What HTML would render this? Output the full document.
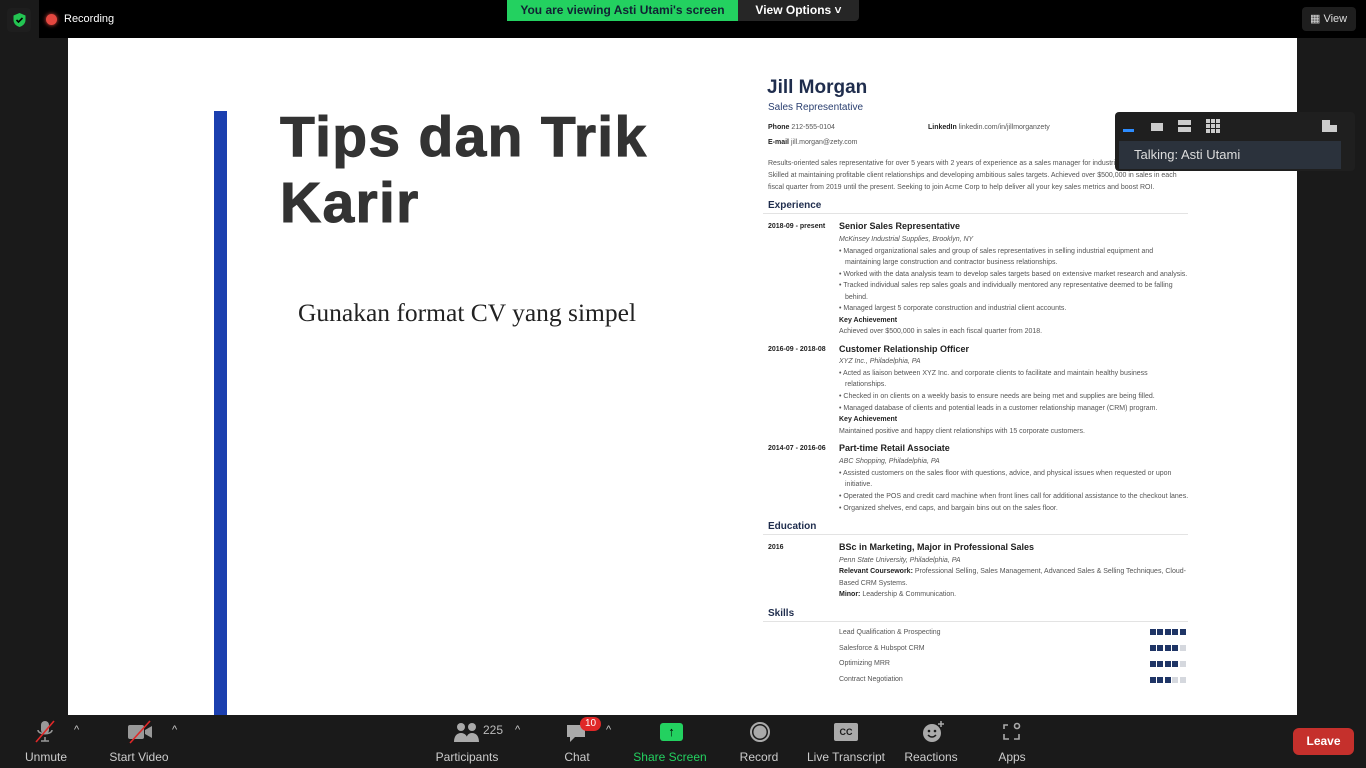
<!DOCTYPE html>
<html><head><meta charset="utf-8"><style>
*{margin:0;padding:0;box-sizing:border-box}
body{width:1366px;height:768px;background:#1a1a1a;position:relative;overflow:hidden;font-family:"Liberation Sans",sans-serif}
.a{position:absolute;white-space:nowrap}
.s{font-size:7px;color:#555}
.b{font-weight:bold;color:#222}
.h{font-size:10px;font-weight:bold;color:#1f2d4d}
.j{font-size:9px;font-weight:bold;color:#222}
.i{font-style:italic}
.tb{position:absolute;top:750px;font-size:12px;color:#ccc;text-align:center;transform:translateX(-50%)}
.sq{display:inline-block;width:6px;height:6px;margin-left:1.6px;background:#1f3566}
.e{background:#d5d8de}
</style></head><body>
<div class="a" style="left:0;top:0;width:1366px;height:38px;background:#000"></div>
<div class="a" style="left:0;top:0;width:39px;height:38px;background:#1a1a1a"></div>
<div class="a" style="left:7px;top:8px;width:24px;height:24px;background:#1e1e1e;border-radius:4px"></div>
<svg class="a" style="left:12px;top:12px" width="15" height="16" viewBox="0 0 15 16"><path d="M7.5 1L1.5 3.5V8c0 3.5 2.7 6 6 7 3.3-1 6-3.5 6-7V3.5z" fill="#23c552"/><path d="M4.5 8l2 2 4-4" stroke="#000" stroke-width="1.6" fill="none"/></svg>
<div class="a" style="left:46px;top:14px;width:11px;height:11px;border-radius:50%;background:#e5473f;box-shadow:0 0 4px #e5473f"></div>
<div class="a" style="left:64px;top:13px;font-size:11px;color:#fff">Recording</div>
<div class="a" style="left:507px;top:0;width:231px;height:21px;background:#23d160;font-size:12px;font-weight:bold;color:#123;line-height:21px;text-align:center">You are viewing Asti Utami's screen</div>
<div class="a" style="left:738px;top:0;width:121px;height:21px;background:#262626;font-size:12px;font-weight:bold;color:#fff;line-height:21px;text-align:center;border-radius:0 0 4px 0">View Options ˅</div>
<div class="a" style="left:1302px;top:7px;width:54px;height:24px;background:#1e1e1e;border-radius:4px;font-size:11px;color:#ddd;line-height:24px;padding-left:8px">▦ View</div>

<div class="a" style="left:68px;top:38px;width:1229px;height:677px;background:#fff"></div>
<div class="a" style="left:214px;top:111px;width:13px;height:604px;background:#1b3faf"></div>
<div class="a" style="left:280px;top:104px;font-size:57px;font-weight:bold;color:#333;line-height:66px;white-space:normal;width:430px;letter-spacing:1.3px;-webkit-text-stroke:1px #333">Tips dan Trik Karir</div>
<div class="a" style="left:298px;top:298px;font-family:'Liberation Serif',serif;font-size:25.5px;color:#222">Gunakan format CV yang simpel</div>

<div class="a" style="left:767px;top:77px;font-size:19px;font-weight:bold;color:#1f2d4d">Jill Morgan</div>
<div class="a" style="left:768px;top:102px;font-size:10px;color:#2a3f70">Sales Representative</div>
<div class="a s" style="left:768px;top:124px"><span class="b">Phone</span>  212-555-0104</div>
<div class="a s" style="left:928px;top:124px"><span class="b">LinkedIn</span>  linkedin.com/in/jillmorganzety</div>
<div class="a s" style="left:768px;top:139px"><span class="b">E-mail</span>  jill.morgan@zety.com</div>
<div class="a s" style="left:768px;top:160px">Results-oriented sales representative for over 5 years with 2 years of experience as a sales manager for industrial</div>
<div class="a s" style="left:768px;top:172px">Skilled at maintaining profitable client relationships and developing ambitious sales targets. Achieved over $500,000 in sales in each</div>
<div class="a s" style="left:768px;top:184px">fiscal quarter from 2019 until the present. Seeking to join Acme Corp to help deliver all your key sales metrics and boost ROI.</div>
<div class="a h" style="left:768px;top:200px">Experience</div>
<div class="a" style="left:763px;top:213px;width:425px;height:1px;background:#e3e3e3"></div>
<div class="a s b" style="left:768px;top:223px">2018-09 - present</div>
<div class="a j" style="left:839px;top:221px">Senior Sales Representative</div>
<div class="a s i" style="left:839px;top:236px">McKinsey Industrial Supplies, Brooklyn, NY</div>
<div class="a s" style="left:839px;top:248px">•  Managed organizational sales and group of sales representatives in selling industrial equipment and</div>
<div class="a s" style="left:845px;top:259px">maintaining large construction and contractor business relationships.</div>
<div class="a s" style="left:839px;top:271px">•  Worked with the data analysis team to develop sales targets based on extensive market research and analysis.</div>
<div class="a s" style="left:839px;top:282px">•  Tracked individual sales rep sales goals and individually mentored any representative deemed to be falling</div>
<div class="a s" style="left:845px;top:294px">behind.</div>
<div class="a s" style="left:839px;top:305px">•  Managed largest 5 corporate construction and industrial client accounts.</div>
<div class="a s b" style="left:839px;top:317px">Key Achievement</div>
<div class="a s" style="left:839px;top:328px">Achieved over $500,000 in sales in each fiscal quarter from 2018.</div>
<div class="a s b" style="left:768px;top:346px">2016-09 - 2018-08</div>
<div class="a j" style="left:839px;top:344px">Customer Relationship Officer</div>
<div class="a s i" style="left:839px;top:358px">XYZ Inc., Philadelphia, PA</div>
<div class="a s" style="left:839px;top:370px">•  Acted as liaison between XYZ Inc. and corporate clients to facilitate and maintain healthy business</div>
<div class="a s" style="left:845px;top:381px">relationships.</div>
<div class="a s" style="left:839px;top:393px">•  Checked in on clients on a weekly basis to ensure needs are being met and supplies are being filled.</div>
<div class="a s" style="left:839px;top:405px">•  Managed database of clients and potential leads in a customer relationship manager (CRM) program.</div>
<div class="a s b" style="left:839px;top:416px">Key Achievement</div>
<div class="a s" style="left:839px;top:428px">Maintained positive and happy client relationships with 15 corporate customers.</div>
<div class="a s b" style="left:768px;top:445px">2014-07 - 2016-06</div>
<div class="a j" style="left:839px;top:443px">Part-time Retail Associate</div>
<div class="a s i" style="left:839px;top:458px">ABC Shopping, Philadelphia, PA</div>
<div class="a s" style="left:839px;top:470px">•  Assisted customers on the sales floor with questions, advice, and physical issues when requested or upon</div>
<div class="a s" style="left:845px;top:481px">initiative.</div>
<div class="a s" style="left:839px;top:493px">•  Operated the POS and credit card machine when front lines call for additional assistance to the checkout lanes.</div>
<div class="a s" style="left:839px;top:505px">•  Organized shelves, end caps, and bargain bins out on the sales floor.</div>
<div class="a h" style="left:768px;top:521px">Education</div>
<div class="a" style="left:763px;top:534px;width:425px;height:1px;background:#e3e3e3"></div>
<div class="a s b" style="left:768px;top:544px">2016</div>
<div class="a j" style="left:839px;top:542px">BSc in Marketing, Major in Professional Sales</div>
<div class="a s i" style="left:839px;top:557px">Penn State University, Philadelphia, PA</div>
<div class="a s" style="left:839px;top:568px"><span class="b">Relevant Coursework:</span> Professional Selling, Sales Management, Advanced Sales &amp; Selling Techniques, Cloud-</div>
<div class="a s" style="left:839px;top:580px">Based CRM Systems.</div>
<div class="a s" style="left:839px;top:591px"><span class="b">Minor:</span> Leadership &amp; Communication.</div>
<div class="a h" style="left:768px;top:608px">Skills</div>
<div class="a" style="left:763px;top:621px;width:425px;height:1px;background:#e3e3e3"></div>
<div class="a s" style="left:839px;top:629px">Lead Qualification &amp; Prospecting</div>
<div class="a s" style="left:839px;top:645px">Salesforce &amp; Hubspot CRM</div>
<div class="a s" style="left:839px;top:660px">Optimizing MRR</div>
<div class="a s" style="left:839px;top:676px">Contract Negotiation</div>
<div class="a" style="left:1148px;top:629px;font-size:0"><i class="sq"></i><i class="sq"></i><i class="sq"></i><i class="sq"></i><i class="sq"></i></div>
<div class="a" style="left:1148px;top:645px;font-size:0"><i class="sq"></i><i class="sq"></i><i class="sq"></i><i class="sq"></i><i class="sq e"></i></div>
<div class="a" style="left:1148px;top:661px;font-size:0"><i class="sq"></i><i class="sq"></i><i class="sq"></i><i class="sq"></i><i class="sq e"></i></div>
<div class="a" style="left:1148px;top:677px;font-size:0"><i class="sq"></i><i class="sq"></i><i class="sq"></i><i class="sq e"></i><i class="sq e"></i></div>

<div class="a" style="left:1115px;top:112px;width:240px;height:59px;background:#1f1f1f;border-radius:4px"></div>
<div class="a" style="left:1123px;top:129px;width:11px;height:3px;background:#2d8cff"></div>
<div class="a" style="left:1151px;top:123px;width:12px;height:8px;background:#ccc"></div>
<div class="a" style="left:1178px;top:120px;width:13px;height:5px;background:#ccc"></div>
<div class="a" style="left:1178px;top:127px;width:13px;height:5px;background:#ccc"></div>
<div class="a" style="left:1206px;top:119px;width:14px;height:14px;background:repeating-linear-gradient(90deg,#ccc 0 4px,transparent 4px 5px);-webkit-mask:repeating-linear-gradient(0deg,#000 0 4px,transparent 4px 5px)"></div>
<div class="a" style="left:1322px;top:120px;width:15px;height:12px;background:#ccc"></div>
<div class="a" style="left:1330px;top:120px;width:7px;height:5px;background:#1f1f1f"></div>
<div class="a" style="left:1119px;top:141px;width:222px;height:28px;background:#2b323c;color:#ddd;font-size:13px;line-height:28px;padding-left:15px">Talking: Asti Utami</div>

<svg class="a" style="left:33px;top:719px" width="24" height="26" viewBox="0 0 24 26"><rect x="8" y="2" width="8" height="13" rx="4" fill="#999"/><path d="M5 11c0 5 14 5 14 0M12 18v4M8 22h8" stroke="#999" stroke-width="1.5" fill="none"/><path d="M3 23L21 2" stroke="#e02828" stroke-width="1.6"/></svg>
<div class="a" style="left:74px;top:724px;color:#ccc;font-size:11px">^</div>
<svg class="a" style="left:126px;top:720px" width="28" height="24" viewBox="0 0 28 24"><rect x="2" y="5" width="16" height="14" rx="2" fill="#999"/><path d="M19 10l7-4v12l-7-4z" fill="#999"/><path d="M4 23L24 1" stroke="#e02828" stroke-width="1.6"/></svg>
<div class="a" style="left:172px;top:724px;color:#ccc;font-size:11px">^</div>
<div class="tb" style="left:46px">Unmute</div>
<div class="tb" style="left:139px">Start Video</div>
<svg class="a" style="left:454px;top:722px" width="26" height="22" viewBox="0 0 26 22"><circle cx="7" cy="5" r="4" fill="#aaa"/><circle cx="18" cy="5" r="4" fill="#aaa"/><path d="M0 20c0-6 3-9 7-9s7 3 7 9zM12 20c0-6 2-9 6-9s7 3 7 9z" fill="#aaa"/></svg>
<div class="a" style="left:483px;top:723px;color:#bbb;font-size:12px">225</div>
<div class="a" style="left:515px;top:724px;color:#ccc;font-size:11px">^</div>
<div class="tb" style="left:467px">Participants</div>
<svg class="a" style="left:566px;top:723px" width="22" height="22" viewBox="0 0 22 22"><path d="M1 2h18v12H9l-5 5v-5H1z" fill="#aaa"/></svg>
<div class="a" style="left:580px;top:717px;width:21px;height:14px;border-radius:7px;background:#e02828;color:#fff;font-size:10px;text-align:center;line-height:14px">10</div>
<div class="a" style="left:606px;top:724px;color:#ccc;font-size:11px">^</div>
<div class="tb" style="left:577px">Chat</div>
<div class="a" style="left:660px;top:723px;width:23px;height:18px;background:#23d160;border-radius:3px;color:#000;font-size:13px;text-align:center;line-height:18px;font-weight:bold">↑</div>
<div class="tb" style="left:670px;color:#23d160">Share Screen</div>
<div class="a" style="left:750px;top:722px;width:20px;height:20px;border-radius:50%;border:2px solid #aaa;background:radial-gradient(#aaa 55%,transparent 60%)"></div>
<div class="tb" style="left:759px">Record</div>
<div class="a" style="left:834px;top:723px;width:24px;height:18px;background:#aaa;border-radius:2px;color:#1a1a1a;font-size:9px;font-weight:bold;text-align:center;line-height:18px">CC</div>
<div class="tb" style="left:846px">Live Transcript</div>
<svg class="a" style="left:921px;top:720px" width="24" height="24" viewBox="0 0 24 24"><circle cx="11" cy="13" r="9" fill="#aaa"/><circle cx="8" cy="11" r="1.3" fill="#1a1a1a"/><circle cx="14" cy="11" r="1.3" fill="#1a1a1a"/><path d="M7 15q4 4 8 0" stroke="#1a1a1a" stroke-width="1.5" fill="none"/><path d="M20 1v6M17 4h6" stroke="#aaa" stroke-width="1.5"/></svg>
<div class="tb" style="left:931px">Reactions</div>
<svg class="a" style="left:1002px;top:722px" width="20" height="20" viewBox="0 0 20 20"><path d="M2 7V3h4M2 12v5h5M12 17h5v-5" stroke="#aaa" stroke-width="1.6" fill="none"/><circle cx="15" cy="4" r="2.5" stroke="#aaa" stroke-width="1.6" fill="none"/></svg>
<div class="tb" style="left:1012px">Apps</div>
<div class="a" style="left:1293px;top:728px;width:61px;height:27px;background:#c5302c;border-radius:6px;color:#fff;font-size:12px;font-weight:bold;text-align:center;line-height:27px">Leave</div>
</body></html>
